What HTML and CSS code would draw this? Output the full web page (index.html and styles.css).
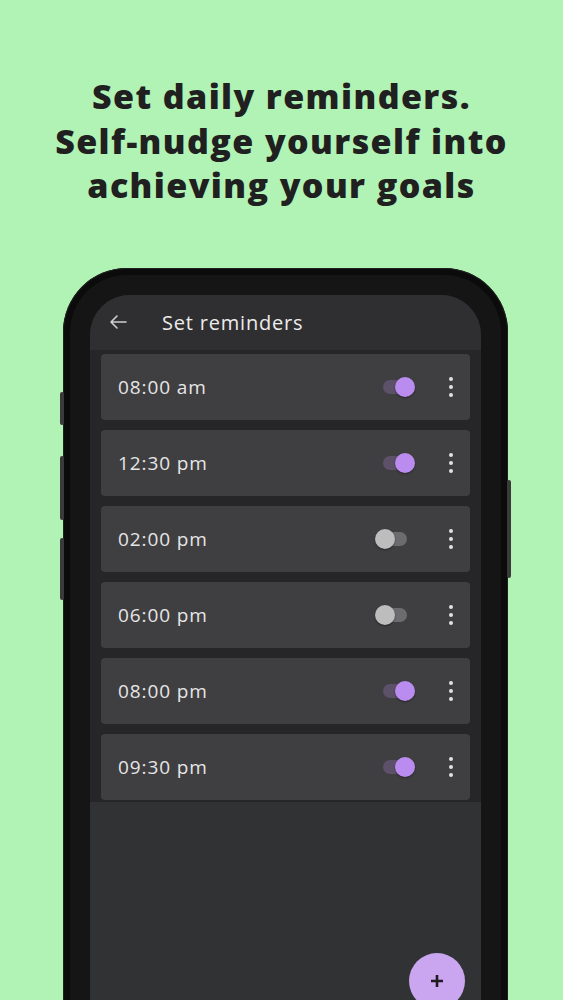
FILE: index.html
```html
<!DOCTYPE html>
<html lang="en">
<head>
    <meta charset="UTF-8">
    <meta name="viewport" content="width=device-width, initial-scale=1.0">
    <title>Set reminders</title>
    <link rel="stylesheet" href="styles.css">
</head>
<body>
    <h1 class="headline">Set daily reminders.<br>Self-nudge yourself into<br>achieving your goals</h1>

    <div class="phone">
        <span class="side-btn left b1"></span>
        <span class="side-btn left b2"></span>
        <span class="side-btn left b3"></span>
        <span class="side-btn right b4"></span>

        <div class="bezel">
            <div class="screen">
                <div class="appbar">
                    <svg class="back" width="20" height="20" viewBox="0 0 20 20">
                        <path d="M18 10H3M9 4L3 10L9 16" fill="none" stroke="#cfcfcf" stroke-width="1.6" stroke-linecap="round" stroke-linejoin="round"/>
                    </svg>
                    <span class="title">Set reminders</span>
                </div>

                <div class="list">
                    <div class="card">
                        <span class="time">08:00 am</span>
                        <span class="switch on"><i></i></span>
                        <span class="kebab"><i></i><i></i><i></i></span>
                    </div>
                    <div class="card">
                        <span class="time">12:30 pm</span>
                        <span class="switch on"><i></i></span>
                        <span class="kebab"><i></i><i></i><i></i></span>
                    </div>
                    <div class="card">
                        <span class="time">02:00 pm</span>
                        <span class="switch"><i></i></span>
                        <span class="kebab"><i></i><i></i><i></i></span>
                    </div>
                    <div class="card">
                        <span class="time">06:00 pm</span>
                        <span class="switch"><i></i></span>
                        <span class="kebab"><i></i><i></i><i></i></span>
                    </div>
                    <div class="card">
                        <span class="time">08:00 pm</span>
                        <span class="switch on"><i></i></span>
                        <span class="kebab"><i></i><i></i><i></i></span>
                    </div>
                    <div class="card">
                        <span class="time">09:30 pm</span>
                        <span class="switch on"><i></i></span>
                        <span class="kebab"><i></i><i></i><i></i></span>
                    </div>
                </div>

                <button class="fab">
                    <svg width="16" height="16" viewBox="0 0 16 16">
                        <path d="M8 2V14M2 8H14" stroke="#1e1a22" stroke-width="2.6"/>
                    </svg>
                </button>
            </div>
        </div>
    </div>
</body>
</html>
```

FILE: styles.css
```css
html, body {
    margin: 0;
    height: 1000px;
    overflow: hidden;
}

body {
    background: #b1f3b5;
    font-family: 'Open Sans', 'Noto Sans', sans-serif;
}

.headline {
    margin: 0;
    padding-top: 74px;
    text-align: center;
    font-family: 'Open Sans', sans-serif;
    font-weight: 800;
    font-size: 34px;
    line-height: 44.5px;
    color: #202020;
    letter-spacing: 1.4px;
}

.phone {
    position: relative;
    width: 445px;
    height: 760px;
    margin: 60px 0 0 63px;
    box-sizing: border-box;
    padding: 7px 7px 0;
    background: #0b0b0b;
    border-radius: 64px 64px 0 0;
    box-shadow: inset 0 0 0 1px #202020;
}

.side-btn {
    position: absolute;
    width: 4px;
    background: #3a3a3a;
    border-radius: 2px;
}

.side-btn.left { left: -3px; }
.side-btn.right { right: -3px; }
.b1 { top: 124px; height: 33px; }
.b2 { top: 188px; height: 64px; }
.b3 { top: 270px; height: 62px; }
.b4 { top: 212px; height: 98px; }

.bezel {
    height: 100%;
    box-sizing: border-box;
    padding: 20px 20px 0;
    background: #151515;
    border-radius: 57px 57px 0 0;
}

.screen {
    position: relative;
    height: 100%;
    background: #313234;
    border-radius: 40px 40px 0 0;
    overflow: hidden;
}

.appbar {
    height: 55px;
    display: flex;
    align-items: center;
    padding-left: 18px;
    background: #2f2f31;
}

.back {
    margin-right: 34px;
}

.title {
    color: #ececec;
    font-size: 20px;
    font-weight: 500;
    letter-spacing: 0.8px;
}

.list {
    display: flex;
    flex-direction: column;
    gap: 10px;
    padding: 4px 11px 2px;
    background: #262628;
}

.card {
    height: 66px;
    display: flex;
    align-items: center;
    padding: 0 16px 0 17px;
    background: #3f3e41;
    border-radius: 4px;
}

.time {
    flex: 1;
    color: #e6e6e6;
    font-size: 19px;
    letter-spacing: 0.9px;
}

.switch {
    position: relative;
    width: 40px;
    height: 20px;
    margin-right: 34px;
}

.switch::before {
    content: "";
    position: absolute;
    left: 6px;
    right: 8px;
    top: 3px;
    height: 14px;
    border-radius: 7px;
    background: #6c6b6e;
}

.switch i {
    position: absolute;
    left: 0;
    top: 0;
    width: 20px;
    height: 20px;
    border-radius: 50%;
    background: #bdbdbd;
    box-shadow: 0 1px 2px rgba(0, 0, 0, 0.4);
}

.switch.on::before {
    left: 8px;
    right: 6px;
    background: #5c5169;
}

.switch.on i {
    left: 20px;
    background: #bb8cf0;
}

.kebab {
    display: flex;
    flex-direction: column;
    gap: 4px;
    margin-right: 1px;
}

.kebab i {
    width: 4px;
    height: 4px;
    border-radius: 50%;
    background: #e2e2e2;
}

.fab {
    position: absolute;
    top: 658px;
    right: 16px;
    width: 56px;
    height: 56px;
    border: none;
    border-radius: 50%;
    background: #cba6f0;
    display: flex;
    align-items: center;
    justify-content: center;
    padding: 0;
}
```
